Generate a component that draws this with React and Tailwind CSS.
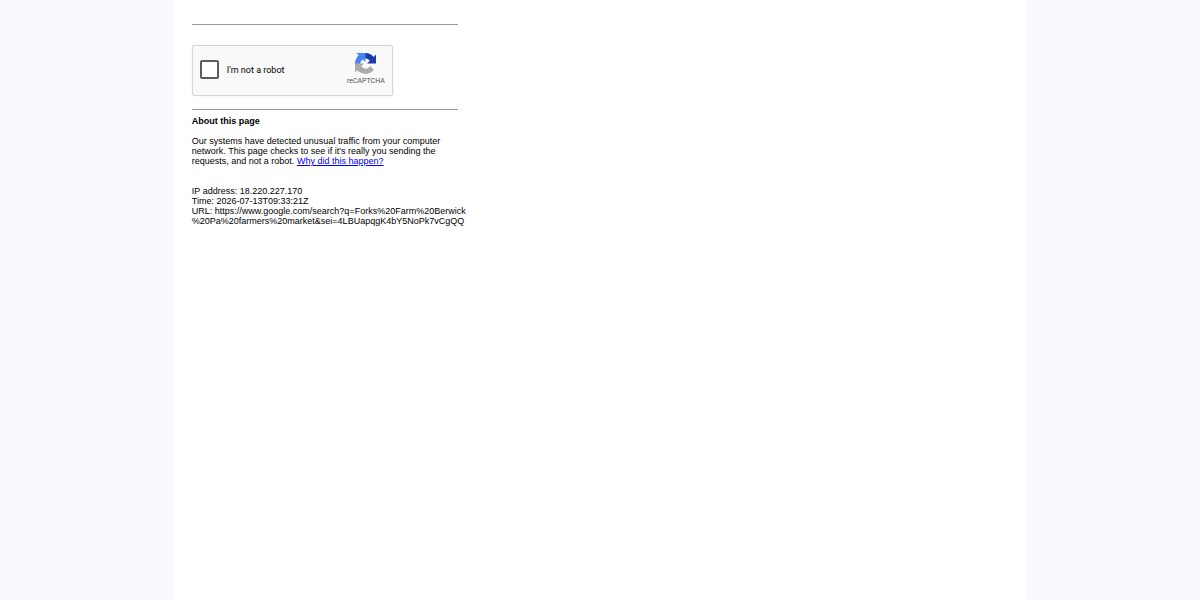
function RecaptchaLogo() {
  return (
    <svg viewBox="0 0 64 64" className="h-[21px] w-[21px]" aria-hidden="true">
      <path
        fill="#1c3aa9"
        d="M64 31.955l-.033-1.37V4.687l-7.16 7.16C50.948 4.674 42.033.093 32.05.093c-10.4 0-19.622 4.96-25.458 12.64l11.736 11.86a15.55 15.55 0 0 1 4.754-5.334c2.05-1.6 4.952-2.906 8.968-2.906.485 0 .86.057 1.135.163 4.976.393 9.288 3.14 11.828 7.124l-8.307 8.307L64 31.953"
      />
      <path
        fill="#4285f4"
        d="M31.862.094l-1.37.033H4.594l7.16 7.16C4.58 13.147 0 22.06 0 32.046c0 10.4 4.96 19.622 12.64 25.458L24.5 45.768a15.55 15.55 0 0 1-5.334-4.754c-1.6-2.05-2.906-4.952-2.906-8.968 0-.485.057-.86.163-1.135.393-4.976 3.14-9.288 7.124-11.828l8.307 8.307L31.86.095"
      />
      <path
        fill="#ababab"
        d="M.001 32.045l.033 1.37v25.898l7.16-7.16c5.86 7.173 14.774 11.754 24.76 11.754 10.4 0 19.622-4.96 25.458-12.64l-11.736-11.86a15.55 15.55 0 0 1-4.754 5.334c-2.05 1.6-4.952 2.906-8.968 2.906-.485 0-.86-.057-1.135-.163-4.976-.393-9.288-3.14-11.828-7.124l8.307-8.307c-10.522.04-22.4.066-27.295-.005"
      />
    </svg>
  )
}

function Recaptcha() {
  return (
    <div className="flex w-[201px] items-center justify-between rounded-[2px] border border-[#d6d6d6] bg-[#f9f9f9] px-[7px] pt-[7px] pb-2.5 shadow-[0_0_2px_rgba(0,0,0,0.08)]">
      <label className="flex items-center gap-2 pt-px font-['Roboto',sans-serif] text-[9px] leading-3 text-black">
        <input
          type="checkbox"
          className="h-[19px] w-[19px] appearance-none rounded-[2px] border-2 border-[#5c5c5c] bg-white"
        />
        I'm not a robot
      </label>
      <div className="flex flex-col items-center text-[#555]">
        <RecaptchaLogo />
        <span className="mt-[3px] font-['Roboto',sans-serif] text-[7px] leading-2">reCAPTCHA</span>
      </div>
    </div>
  )
}

export default function App() {
  return (
    <div className="flex min-h-screen bg-[#f8faff] font-['Liberation_Sans',Arial,sans-serif] text-[9px] leading-[10px] text-black">
      <main className="mr-[14.5%] ml-[14.4%] grow bg-white px-[19px] pt-6">
        <div className="max-w-[266px]">
          <hr className="border-[#999]" />
          <div className="mt-5 mb-[13px]">
            <Recaptcha />
          </div>
          <hr className="border-[#999]" />
          <h1 className="mt-1.5 font-bold">About this page</h1>
          <p className="mt-2.5">
            Our systems have detected unusual traffic from your computer network. This page checks to
            see if it's really you sending the requests, and not a robot.{' '}
            <a href="#why" className="text-[#0000ee] underline">
              Why did this happen?
            </a>
          </p>
        </div>
        <p className="mt-5 max-w-[280px]">
          IP address: 18.220.227.170
          <br />
          Time: 2026-07-13T09:33:21Z
          <br />
          URL: https://www.google.com/search?q=Forks%20Farm%20Berwick
          <wbr />
          %20Pa%20farmers%20market&amp;sei=4LBUapqgK4bY5NoPk7vCgQQ
        </p>
      </main>
    </div>
  )
}
